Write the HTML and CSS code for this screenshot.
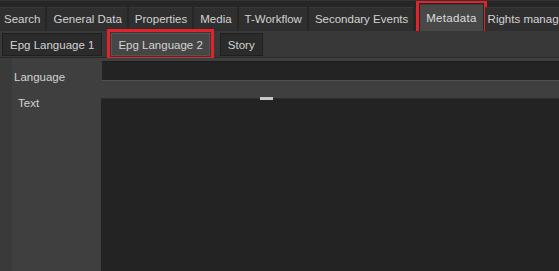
FILE: index.html
```html
<!DOCTYPE html>
<html>
<head>
<meta charset="utf-8">
<link rel="stylesheet" href="styles.css">
</head>
<body>
<div class="app">
  <div class="tabbar">
    <div class="tab first">Search</div>
    <div class="tab">General Data</div>
    <div class="tab">Properties</div>
    <div class="tab">Media</div>
    <div class="tab">T-Workflow</div>
    <div class="tab">Secondary Events</div>
    <div class="tab active marked">Metadata</div>
    <div class="tab after-active">Rights management</div>
  </div>
  <div class="subbar">
    <div class="subtab">Epg Language 1</div>
    <div class="subtab active marked">Epg Language 2</div>
    <div class="subtab">Story</div>
  </div>
  <div class="panel">
    <div class="row lang-row">
      <div class="label">Language</div>
      <div class="input"></div>
    </div>
    <div class="row text-row">
      <div class="label text-label">Text</div>
      <div class="textarea"><span class="grip"></span></div>
    </div>
  </div>
</div>
</body>
</html>
```
FILE: styles.css
```css
* { box-sizing: border-box; }
html, body { margin: 0; padding: 0; }
body {
  width: 559px;
  height: 271px;
  overflow: hidden;
  background: #3e3e3e;
  font-family: "Liberation Sans", Arial, sans-serif;
  font-size: 11.5px;
  color: #d2d2d2;
}
.app { display: flex; flex-direction: column; height: 271px; }

.tabbar {
  display: flex;
  align-items: flex-end;
  height: 31px;
  padding: 3px 0 0 0;
  background: #262626;
  border-top: 1px solid #333;
  gap: 2px;
  white-space: nowrap;
  overflow: hidden;
}
.tab {
  height: 24px;
  line-height: 22px;
  padding: 0 5px 0 6px;
  background: #2f2f2f;
  border-top: 1px solid #383838;
  flex-shrink: 0;
}
.tab.first { padding-left: 4px; }
.tab.active {
  height: 27px;
  line-height: 26px;
  background: #484848;
  color: #dcdcdc;
  padding: 0 6px 0 6px;
  margin: 0 0 0 5px;
  letter-spacing: 0.3px;
}
.tab.after-active { padding-left: 3px; }
.marked { outline: 3px solid #e3222b; outline-offset: 1px; }

.subbar {
  display: flex;
  align-items: center;
  height: 27px;
  padding: 1px 0 0 2px;
  background: #383838;
  gap: 8px;
  border-bottom: 1px solid #2a2a2a;
}
.subtab {
  height: 23px;
  line-height: 22px;
  padding: 0 7px;
  background: #2b2b2b;
  border: 1px solid #1f1f1f;
}
.subtab.active {
  background: #464646;
  border-color: #555;
  padding: 0 6px;
  margin: 0 2px 0 1px;
  outline-offset: 1px;
}

.panel {
  flex: 1;
  display: flex;
  flex-direction: column;
  background: linear-gradient(to right, #3a3a3a 0 12px, #3f3f3f 12px);
  padding-top: 3px;
}
.row { display: flex; }
.label { width: 102px; padding-left: 14px; flex-shrink: 0; }
.lang-row { height: 37px; }
.lang-row .label { line-height: 20px; padding-top: 6px; }
.input {
  flex: 1;
  height: 20px;
  background: #232323;
  border-top: 1px solid #1c1c1c;
  border-bottom: 1px solid #525252;
}
.text-row { flex: 1; }
.text-label { width: 101px; padding-left: 18px; margin-top: -1px; }
.textarea {
  flex: 1;
  position: relative;
  background: #232323;
  border-top: 1px solid #2e2e2e;
}
.grip {
  position: absolute;
  left: 159px;
  top: -2px;
  width: 13px;
  height: 3px;
  background: #c8c8c8;
}
```
